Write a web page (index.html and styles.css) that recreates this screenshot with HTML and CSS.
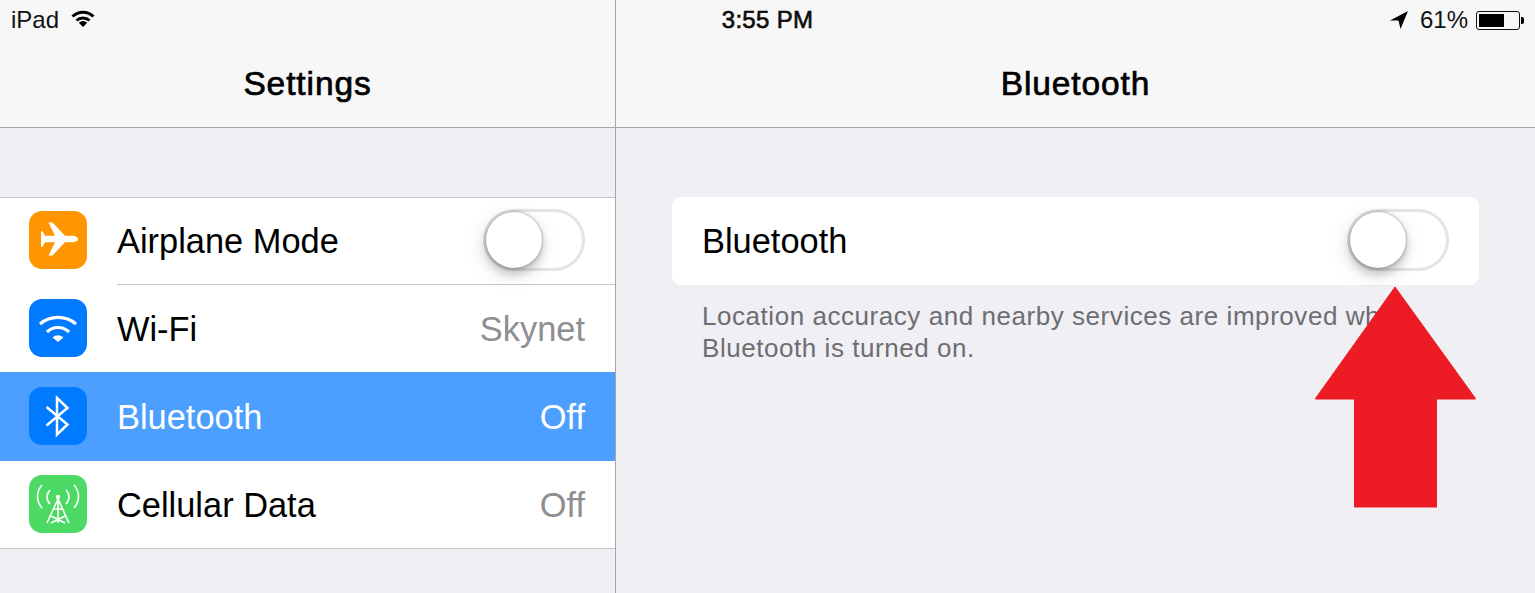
FILE: index.html
```html
<!DOCTYPE html>
<html>
<title>Settings - Bluetooth</title>

<head>
    <link rel="stylesheet" href="styles.css">
</head>

<body>

    <!-- The status bar sits over both nav bars -->
    <div class="status">
        <div class="status-left">
            <span>iPad</span>
            <svg class="status-wifi" viewBox="0 0 24 17">
                <path d="M1.500 6.500a15 15 0 0 1 21 0M5.500 10.500a9.500 9.500 0 0 1 13 0" fill="none" stroke="#000" stroke-width="3"/>
                <path d="M12 17l-4.200-4.200a6 6 0 0 1 8.400 0z" fill="#000"/>
            </svg>
        </div>
        <div class="status-time">3:55 PM</div>
        <div class="status-right">
            <svg class="status-arrow" viewBox="0 0 18 18">
                <path d="M18 0L0 9.500 8.500 9.500 10.500 18z" fill="#000"/>
            </svg>
            <span class="status-percent">61%</span>
            <div class="battery">
                <div class="battery-level"></div>
            </div>
            <div class="battery-nub"></div>
        </div>
    </div>

    <div class="split">

        <div class="master">
            <div class="nav">Settings</div>
            <div class="list">
                <div class="row">
                    <svg class="icon" viewBox="0 0 58 58">
                        <rect width="58" height="58" rx="13" fill="#ff9500"/>
                        <path d="M49 28c0-2-3-3.300-6-3.300H36L23.500 11.500h-4L26 24.700H16L13.500 20.300H12v15.400h1.500L16 31.300h10L19.500 44.500h4L36 31.300H43c3 0 6-1.300 6-3.300z" fill="#fff"/>
                    </svg>
                    <span class="row-label">Airplane Mode</span>
                    <div class="toggle">
                        <div class="knob"></div>
                    </div>
                </div>
                <div class="sep"></div>
                <div class="row">
                    <svg class="icon" viewBox="0 0 58 58">
                        <rect width="58" height="58" rx="13" fill="#007aff"/>
                        <path d="M11 25a28 28 0 0 1 36 0M18 33a15.700 15.700 0 0 1 22 0" fill="none" stroke="#fff" stroke-width="3.200"/>
                        <path d="M29 43l-5.500-4.500a8 8 0 0 1 11 0z" fill="#fff"/>
                    </svg>
                    <span class="row-label">Wi-Fi</span>
                    <span class="row-value">Skynet</span>
                </div>
                <div class="row selected">
                    <svg class="icon" viewBox="0 0 58 58">
                        <rect width="58" height="58" rx="13" fill="#007aff"/>
                        <path d="M17.500 20L38.500 37.500 28 47.500V11L38.500 21 17.500 38.500" fill="none" stroke="#fff" stroke-width="2.500"/>
                    </svg>
                    <span class="row-label">Bluetooth</span>
                    <span class="row-value">Off</span>
                </div>
                <div class="row">
                    <svg class="icon" viewBox="0 0 58 58">
                        <rect width="58" height="58" rx="13" fill="#4cd964"/>
                        <g fill="none" stroke="#fff" stroke-width="1.600">
                            <path d="M13 10c-6 7-6 16 0 23M45 10c6 7 6 16 0 23M21 15c-4 4-4 10 0 14M37 15c4 4 4 10 0 14"/>
                            <path d="M29 24V48M29 24L18 48M29 24L40 48M25 34H33M22 41L36 48M36 41L22 48"/>
                        </g>
                        <circle cx="29" cy="22" r="2.200" fill="#fff"/>
                    </svg>
                    <span class="row-label">Cellular Data</span>
                    <span class="row-value">Off</span>
                </div>
            </div>
        </div>

        <div class="detail">
            <div class="nav">Bluetooth</div>
            <div class="detail-body">
                <div class="card">
                    <span class="row-label">Bluetooth</span>
                    <div class="toggle">
                        <div class="knob"></div>
                    </div>
                </div>
                <p class="note">Location accuracy and nearby services are improved when Bluetooth is turned on.</p>
            </div>
        </div>

    </div>

    <!-- Red arrow drawn on top of the screenshot -->
    <svg class="red-arrow" viewBox="0 0 163 223">
        <path d="M81 1L161.500 112.500V113H122.500V221H40.500V113H1.500V112.500z" fill="#ed1c24" stroke="#ed1c24" stroke-width="1" stroke-linejoin="round"/>
    </svg>

</body>

</html>
```

FILE: styles.css
```css
* {
    box-sizing: border-box;
}

html,
body {
    height: 100%;
}

body {
    margin: 0;
    overflow: hidden;
    position: relative;
    background-color: #efeff4;
    color: #000;
    font-family: "Liberation Sans", Arial, sans-serif;
}

/* Status bar */

.status {
    position: absolute;
    top: 0;
    left: 0;
    width: 100%;
    height: 40px;
    padding: 0 11px 0 11px;
    display: grid;
    grid-template-columns: 1fr auto 1fr;
    align-items: center;
    font-size: 24px;
    color: #111;
}

.status-left {
    display: flex;
    align-items: center;
}

.status-wifi {
    width: 24px;
    height: 17px;
    margin-left: 12px;
    margin-top: -3px;
}

.status-time {
    font-size: 24px;
    letter-spacing: 0.3px;
    -webkit-text-stroke: 0.6px #000;
}

.status-right {
    display: flex;
    align-items: center;
    justify-content: flex-end;
}

.status-arrow {
    width: 18px;
    height: 18px;
    margin-right: 12px;
}

.status-percent {
    margin-right: 8px;
}

.battery {
    width: 44px;
    height: 19px;
    padding: 2px;
    border: 1px solid #111;
    border-radius: 3px;
}

.battery-level {
    width: 25px;
    height: 100%;
    background-color: #000;
}

.battery-nub {
    width: 3px;
    height: 7px;
    margin-left: 1px;
    background-color: #000;
    border-radius: 0 2px 2px 0;
}

/* Split view */

.split {
    display: flex;
    height: 100%;
}

.master {
    width: 616px;
    border-right: 1px solid #a7a7aa;
}

.detail {
    flex: 1;
}

.nav {
    height: 128px;
    padding-top: 40px;
    display: flex;
    align-items: center;
    justify-content: center;
    background-color: #f7f7f7;
    border-bottom: 1px solid #a7a7aa;
    font-size: 33.5px;
    letter-spacing: 0.9px;
    -webkit-text-stroke: 0.7px #000;
}

/* Settings list */

.list {
    margin-top: 69px;
    background-color: #fff;
    border-top: 1px solid #c8c7cc;
    border-bottom: 1px solid #c8c7cc;
}

.row {
    display: flex;
    align-items: center;
    padding: 14px 30px 15px 29px;
}

.row:first-child {
    padding-top: 13px;
}

.row.selected {
    padding-top: 15px;
    padding-bottom: 16px;
    background-color: #4c9fff;
    color: #fff;
}

.sep {
    height: 1px;
    margin-left: 117px;
    background-color: #c8c7cc;
}

.icon {
    width: 58px;
    height: 58px;
    margin-right: 30px;
    flex-shrink: 0;
}

.row-label {
    flex: 1;
    margin-top: 2px;
    font-size: 34.4px;
}

.row-value {
    margin-top: 2px;
    font-size: 34.4px;
    color: #8e8e93;
}

.row.selected .row-value {
    color: #fff;
}

/* Toggle switch */

.toggle {
    width: 102px;
    height: 62px;
    margin: -2px 0;
    border: 3px solid #e5e5e5;
    border-radius: 31px;
    background-color: #fff;
}

.knob {
    width: 56px;
    height: 56px;
    border-radius: 50%;
    background-color: #fff;
    box-shadow: 0 0 3px rgba(0, 0, 0, 0.4), 0 6px 10px rgba(0, 0, 0, 0.2), -2px 6px 22px rgba(0, 0, 0, 0.12);
}

/* Bluetooth detail */

.detail-body {
    padding: 69px 56px 0;
}

.card {
    height: 88px;
    padding: 0 30px 2px 30px;
    display: flex;
    align-items: center;
    background-color: #fff;
    border-radius: 9px;
}

.note {
    margin: 15px 0 0;
    padding: 0 30px;
    font-size: 26px;
    line-height: 32px;
    letter-spacing: 0.55px;
    color: #6d6d72;
}

.red-arrow {
    position: absolute;
    left: 1314px;
    top: 286px;
    width: 163px;
    height: 223px;
}
```
